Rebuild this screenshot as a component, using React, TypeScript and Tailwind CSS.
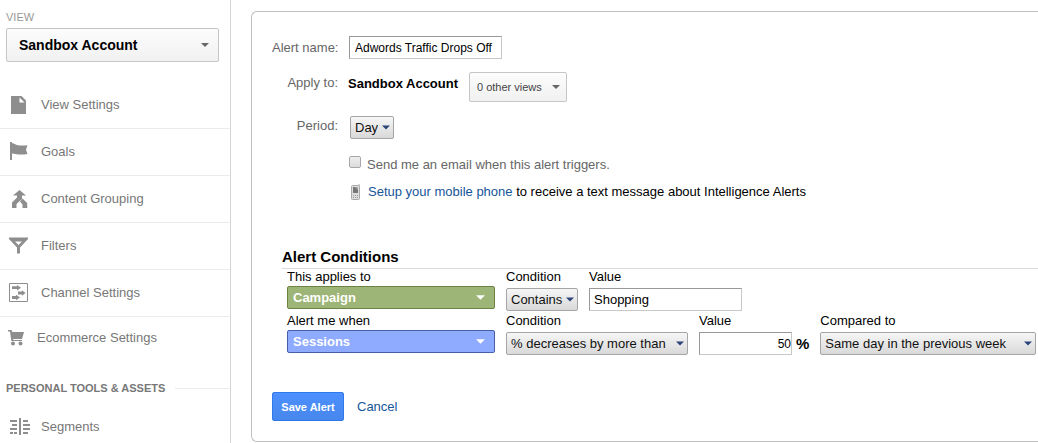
import { useState } from 'react'
import type { ReactNode } from 'react'

const menuItems = [
  {
    label: 'View Settings',
    icon: (
      <>
        <path d="M3 2h10.500l4.500 4.500V20H3z" />
        <path d="M11.500 3.500v5h5z" fill="#fff" />
      </>
    ),
  },
  {
    label: 'Goals',
    icon: <path d="M2 1h2v1c2.500.5 3 1.700 6 2.200s6 .3 9.500 0l-1.500 4.500 1.500 4.300c-3.500.6-6 .7-9 .5-2.500-.2-4-1-6.500-1V19H2z" />,
  },
  {
    label: 'Content Grouping',
    icon: (
      <>
        <path d="M11.500 2l6.500 5.500h-4V11L8.500 16v4H4v-5.500L9 9.500v-2H5z" />
        <path d="M12 13.500l2.500-3 4.700 4.500V20h-4.700v-3.500z" />
      </>
    ),
  },
  {
    label: 'Filters',
    icon: <path fillRule="evenodd" d="M1 2.500h19v1.500l-8 8.500v6H9v-6L1 4zM7 6.500l3.500 3.500L14 6.500z" />,
  },
  {
    label: 'Channel Settings',
    icon: (
      <>
        <path d="M1.500 1.500h18v18h-18z" fill="none" stroke="#8e8e8e" />
        <path d="M4 4.300h5V3l4 2.700L9 8.500V7H4zM10 9.600h4V8.300l3.500 2.700-3.500 2.700v-1.300h-4zM4 14.100h4V12.800l4 2.700L8 18.200v-1.300H4z" />
      </>
    ),
  },
]

function MenuIcon({ children }: { children: ReactNode }) {
  return (
    <svg className="size-5 shrink-0 overflow-visible fill-[#8e8e8e]" viewBox="0 1 20 20">
      {children}
    </svg>
  )
}

type DropdownProps = {
  label: string
  value: string
  id?: string
  className: string
  caret: string
}

function Dropdown({ label, value, id, className, caret }: DropdownProps) {
  return (
    <div className="relative flex w-fit">
      <select id={id} aria-label={id ? undefined : label} className={`appearance-none outline-none ${className}`}>
        <option>{value}</option>
      </select>
      <svg className={`absolute top-0 h-full pointer-events-none ${caret}`} viewBox="0 0 8 4">
        <path d="M0 0h8L4 4z" />
      </svg>
    </div>
  )
}

const greySelect = 'h-[23px] pl-1 text-[13px] text-[#111] border border-[#a5a5a5] rounded-xs bg-linear-to-b from-[#f6f6f6] to-[#d9d9d9]'
const lightSelect = 'border border-[#c6c6c6] rounded-xs bg-linear-to-b from-[#fcfcfc] to-[#f1f1f1]'
const colorSelect = 'w-[208px] h-[23px] pl-[5px] text-[13px] font-bold text-white border rounded-xs'
const textInput = 'h-[23px] border border-[#c8c8c8] border-t-[#999] border-l-[#999] bg-white outline-none'
const blueCaret = 'right-1 w-2 fill-[#2b4479]'

export default function App() {
  const [name, setName] = useState('Adwords Traffic Drops Off')
  const [value, setValue] = useState('Shopping')
  const [percent, setPercent] = useState('50')
  const [sendEmail, setSendEmail] = useState(false)

  return (
    <div className="flex min-h-screen overflow-hidden bg-white font-['Liberation_Sans',Arial,sans-serif] text-[13px] leading-4 text-black">
      <aside className="w-[231px] shrink-0 border-r border-[#d5d5d5] text-[#777]">
        <div className="px-[6px] pt-[9px]">
          <label htmlFor="view" className="block mb-[3px] text-[11px] text-[#999]">VIEW</label>
          <Dropdown id="view" label="View" value="Sandbox Account" className={`w-[213px] h-[34px] pl-3 text-sm font-bold text-black ${lightSelect}`} caret="right-[10px] w-2 fill-[#666]" />
        </div>
        <nav className="pt-5">
          {menuItems.map((item) => (
            <a key={item.label} href="#" className="flex items-center gap-3 h-[47px] pl-2 border-b border-[#ebebeb]">
              <MenuIcon>{item.icon}</MenuIcon>
              <span className="pl-px">{item.label}</span>
            </a>
          ))}
          <a href="#" className="flex items-center gap-[10px] h-[42px] pl-[7px]">
            <MenuIcon>
              <path d="M1 3h3.500l.8 2H17l-2 7H6.500l-.5 1h9v1H4.500L4 12 3 4.500H1z" />
              <circle cx="6" cy="16.500" r="2" />
              <circle cx="13.500" cy="16.500" r="2" />
            </MenuIcon>
            Ecommerce Settings
          </a>
          <h2 className="flex items-center gap-[10px] mt-[21px] pl-[6px] text-[11px] font-bold whitespace-nowrap after:h-px after:flex-1 after:bg-[#ebebeb]">
            PERSONAL TOOLS &amp; ASSETS
          </h2>
          <a href="#" className="flex items-center gap-3 h-[47px] mt-[7px] pl-[9px]">
            <MenuIcon>
              <path d="M10 2h2v17h-2zM1 4h7v2H1zM3 8h5v2H3zM1 12h7v2H1zM1 16h3v2H1zM5 16h3v2H5zM14 4h5v2h-5zM14 8h7v2h-7zM14 12h7v2h-7zM14 16h5v2h-5z" />
            </MenuIcon>
            Segments
          </a>
        </nav>
      </aside>

      <main className="flex-1 min-w-0 pt-[11px] pl-5">
        <form onSubmit={(e) => e.preventDefault()} className="pt-6 pb-5 pl-5 border border-r-0 border-[#c0c0c0] rounded-l-md whitespace-nowrap">
          <div className="flex items-start gap-[11px]">
            <label htmlFor="name" className="w-[66px] pt-1 text-right text-[#666]">Alert name:</label>
            <input id="name" type="text" value={name} onChange={(e) => setName(e.target.value)} className={`w-[153px] pl-[5px] text-xs ${textInput}`} />
          </div>

          <div className="flex items-start mt-[13px]">
            <span className="w-[66px] pt-[3px] text-right text-[#666]">Apply to:</span>
            <b className="w-[131px] pl-[10px] pt-1">Sandbox Account</b>
            <Dropdown label="Other views" value="0 other views" className={`w-[98px] h-[30px] pl-[7px] text-[11px] text-[#444] ${lightSelect}`} caret="right-[7px] w-2 fill-[#666]" />
          </div>

          <div className="flex items-start gap-3 mt-[14px]">
            <label htmlFor="period" className="w-[66px] pt-[2px] text-right text-[#666]">Period:</label>
            <Dropdown id="period" label="Period" value="Day" className={`w-11 ${greySelect}`} caret={blueCaret} />
          </div>

          <div className="flex items-start gap-[6px] mt-[17px] pl-[77px] text-[#666]">
            <input id="email" type="checkbox" checked={sendEmail} onChange={() => setSendEmail(!sendEmail)} className="appearance-none size-3 border border-[#a8a8a8] rounded-xs bg-linear-to-b from-[#eee] to-[#dcdcdc] checked:bg-[#2b4479]" />
            <label htmlFor="email" className="pt-px">Send me an email when this alert triggers.</label>
          </div>

          <div className="flex items-center gap-2 mt-[11px] pl-[79px]">
            <svg className="w-[9px] h-4" viewBox="0 0 9 16">
              <path d="M7.500 0h1v3h-1z" fill="#aaa" />
              <rect x=".5" y="1.500" width="8" height="14" rx="1" fill="#dedede" stroke="#aaa" />
              <path d="M2 3h5v6H2z" fill="#777" />
              <path d="M4 3h3v3z" fill="#aaa" />
              <path d="M2 11h1v1H2zM4 11h1v1H4zM6 11h1v1H6zM2 13h1v1H2zM4 13h1v1H4zM6 13h1v1H6z" fill="#999" />
            </svg>
            <p>
              <a href="#" className="text-[#15559a]">Setup your mobile phone</a> to receive a text message about Intelligence Alerts
            </p>
          </div>

          <h1 className="mt-[46px] ml-[10px] pb-px border-b border-[#d9d9d9] text-[15px] leading-[21px] font-bold">Alert Conditions</h1>

          <div className="flex gap-[11px] pl-[15px]">
            <div className="flex flex-col gap-px">
              <label htmlFor="dimension">This applies to</label>
              <Dropdown id="dimension" label="This applies to" value="Campaign" className={`border-[#6d8343] bg-[#9db576] ${colorSelect}`} caret="right-[10px] w-[9px] fill-white" />
            </div>
            <div className="flex flex-col gap-[3px]">
              <label htmlFor="match">Condition</label>
              <Dropdown id="match" label="Condition" value="Contains" className={`w-[72px] ${greySelect}`} caret={blueCaret} />
            </div>
            <div className="flex flex-col gap-[3px]">
              <label htmlFor="value">Value</label>
              <input id="value" type="text" value={value} onChange={(e) => setValue(e.target.value)} className={`w-[153px] pl-1 ${textInput}`} />
            </div>
          </div>

          <div className="flex gap-[11px] mt-[2px] pl-[15px]">
            <div className="flex flex-col gap-px">
              <label htmlFor="metric">Alert me when</label>
              <Dropdown id="metric" label="Alert me when" value="Sessions" className={`border-[#4560a5] bg-[#8fabff] ${colorSelect}`} caret="right-[10px] w-[9px] fill-white" />
            </div>
            <div className="flex flex-col gap-[3px]">
              <label htmlFor="change">Condition</label>
              <Dropdown id="change" label="Condition" value="% decreases by more than" className={`w-[182px] ${greySelect}`} caret={blueCaret} />
            </div>
            <div className="flex flex-col gap-[3px]">
              <label htmlFor="percent">Value</label>
              <div className="flex items-center gap-1">
                <input id="percent" type="text" value={percent} onChange={(e) => setPercent(e.target.value)} className={`w-[93px] text-xs text-right ${textInput}`} />
                <b className="text-[15px] leading-4">%</b>
              </div>
            </div>
            <div className="flex flex-col gap-[3px]">
              <label htmlFor="compared">Compared to</label>
              <Dropdown id="compared" label="Compared to" value="Same day in the previous week" className={`w-[216px] ${greySelect}`} caret={blueCaret} />
            </div>
          </div>

          <div className="flex items-center gap-[13px] mt-[37px]">
            <button type="submit" className="w-[72px] h-[29px] border border-[#3079ed] rounded-xs bg-linear-to-b from-[#4d90fe] to-[#4787ed] text-[11px] font-bold text-white">
              Save Alert
            </button>
            <a href="#" className="text-[#15559a]">Cancel</a>
          </div>
        </form>
      </main>
    </div>
  )
}
